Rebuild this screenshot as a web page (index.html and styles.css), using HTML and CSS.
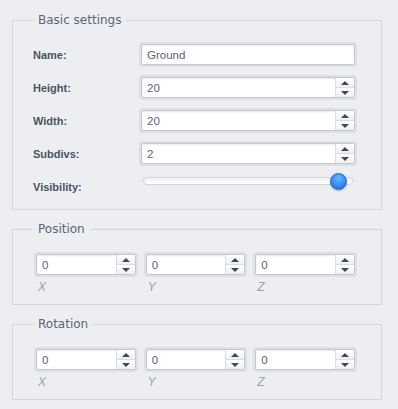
FILE: index.html
```html
<!DOCTYPE html>
<html lang="en">
<head>
    <meta charset="UTF-8">
    <title>Ground settings</title>
    <link rel="stylesheet" href="styles.css">
</head>
<body>
    <form class="panel">
        <!-- Basic settings -->
        <fieldset class="group">
            <legend>Basic settings</legend>
            <div class="form-row">
                <label>Name:</label>
                <div class="field"><input type="text" value="Ground"></div>
            </div>
            <div class="form-row">
                <label>Height:</label>
                <div class="field spinner">
                    <input type="text" value="20">
                    <div class="spin-buttons"><span class="up"></span><span class="down"></span></div>
                </div>
            </div>
            <div class="form-row">
                <label>Width:</label>
                <div class="field spinner">
                    <input type="text" value="20">
                    <div class="spin-buttons"><span class="up"></span><span class="down"></span></div>
                </div>
            </div>
            <div class="form-row">
                <label>Subdivs:</label>
                <div class="field spinner">
                    <input type="text" value="2">
                    <div class="spin-buttons"><span class="up"></span><span class="down"></span></div>
                </div>
            </div>
            <div class="form-row slider-row">
                <label>Visibility:</label>
                <div class="slider">
                    <div class="slider-track"></div>
                    <div class="slider-thumb"></div>
                </div>
            </div>
        </fieldset>

        <!-- Position -->
        <fieldset class="group vector-group">
            <legend>Position</legend>
            <div class="vector">
                <div class="axis">
                    <div class="field spinner">
                        <input type="text" value="0">
                        <div class="spin-buttons"><span class="up"></span><span class="down"></span></div>
                    </div>
                    <span class="axis-label">X</span>
                </div>
                <div class="axis">
                    <div class="field spinner">
                        <input type="text" value="0">
                        <div class="spin-buttons"><span class="up"></span><span class="down"></span></div>
                    </div>
                    <span class="axis-label">Y</span>
                </div>
                <div class="axis">
                    <div class="field spinner">
                        <input type="text" value="0">
                        <div class="spin-buttons"><span class="up"></span><span class="down"></span></div>
                    </div>
                    <span class="axis-label">Z</span>
                </div>
            </div>
        </fieldset>

        <!-- Rotation -->
        <fieldset class="group vector-group">
            <legend>Rotation</legend>
            <div class="vector">
                <div class="axis">
                    <div class="field spinner">
                        <input type="text" value="0">
                        <div class="spin-buttons"><span class="up"></span><span class="down"></span></div>
                    </div>
                    <span class="axis-label">X</span>
                </div>
                <div class="axis">
                    <div class="field spinner">
                        <input type="text" value="0">
                        <div class="spin-buttons"><span class="up"></span><span class="down"></span></div>
                    </div>
                    <span class="axis-label">Y</span>
                </div>
                <div class="axis">
                    <div class="field spinner">
                        <input type="text" value="0">
                        <div class="spin-buttons"><span class="up"></span><span class="down"></span></div>
                    </div>
                    <span class="axis-label">Z</span>
                </div>
            </div>
        </fieldset>
    </form>
</body>
</html>
```

FILE: styles.css
```css
:root {
    --bg: #eceef1;
    --border: #d3d6da;
    --legend: #5b6576;
    --label: #4a5463;
    --value: #56657a;
    --axis: #9ca3ad;
    --ring: #dde0e4;
    --input-border: #c4c8cd;
}

* {
    box-sizing: border-box;
}

body {
    margin: 0;
    background: var(--bg);
    font-family: "Liberation Sans", Arial, sans-serif;
}

.panel {
    padding-top: 12px;
}

.group {
    min-width: 0;
    margin: 0 16px 11px 12px;
    padding: 14px 24px 10px 20px;
    border: 1px solid var(--border);
}

.vector-group {
    padding-bottom: 9px;
}

.group legend {
    padding: 0 5px;
    font-family: "DejaVu Sans", Verdana, sans-serif;
    font-size: 12px;
    line-height: 16px;
    color: var(--legend);
}

.form-row {
    display: flex;
    align-items: center;
    height: 25px;
    margin-bottom: 8px;
}

.form-row:last-child {
    margin-bottom: 0;
}

.form-row label {
    width: 106px;
    flex: none;
    font-size: 11px;
    font-weight: bold;
    color: var(--label);
}

.field {
    flex: 1;
    min-width: 0;
    display: flex;
    height: 21px;
    margin: 2px;
    background: #fff;
    border: 1px solid var(--input-border);
    border-radius: 2px;
    box-shadow: 0 0 0 2px var(--ring), inset 0 1px 2px rgba(0, 0, 0, 0.08);
}

.field input {
    flex: 1;
    width: 0;
    min-width: 0;
    border: none;
    outline: none;
    background: transparent;
    padding: 0 5px;
    font-family: "Liberation Sans", Arial, sans-serif;
    font-size: 11.5px;
    color: var(--value);
}

.spin-buttons {
    display: flex;
    flex-direction: column;
    width: 19px;
    flex: none;
    border-left: 1px solid #dadde1;
}

.spin-buttons span {
    flex: 1;
    display: flex;
    align-items: center;
    justify-content: center;
    background: linear-gradient(#ffffff, #eef0f2);
}

.spin-buttons .down {
    border-top: 1px solid #dadde1;
}

.spin-buttons .up::before,
.spin-buttons .down::before {
    content: "";
    border-left: 4px solid transparent;
    border-right: 4px solid transparent;
}

.spin-buttons .up::before {
    border-bottom: 4px solid #3f4854;
}

.spin-buttons .down::before {
    border-top: 4px solid #3f4854;
}

/* Slider */
.slider-row {
    align-items: flex-start;
}

.slider-row label {
    align-self: center;
}

.slider {
    position: relative;
    flex: 1;
    height: 16px;
    margin: -1px 4px 0 4px;
}

.slider-track {
    margin-top: 4px;
    height: 8px;
    background: linear-gradient(#f0f1f3, #ffffff);
    border: 1px solid #d2d5da;
    border-radius: 4px;
}

.slider-thumb {
    position: absolute;
    top: 0;
    right: 6px;
    width: 17px;
    height: 17px;
    border-radius: 50%;
    background: radial-gradient(circle at 50% 30%, #6cb6ff, #2a80f0 70%);
    border: 1px solid #1d63c9;
    box-shadow: 0 1px 2px rgba(0, 0, 0, 0.25);
}

/* Vector inputs */
.vector {
    display: flex;
    gap: 6px;
    margin: 1px 0 0 1px;
}

.axis {
    flex: 1;
    min-width: 0;
    display: flex;
    flex-direction: column;
}

.axis .field {
    flex: none;
}

.axis-label {
    padding: 3px 0 0 4px;
    font-size: 12px;
    line-height: 15px;
    font-style: italic;
    color: var(--axis);
}
```
